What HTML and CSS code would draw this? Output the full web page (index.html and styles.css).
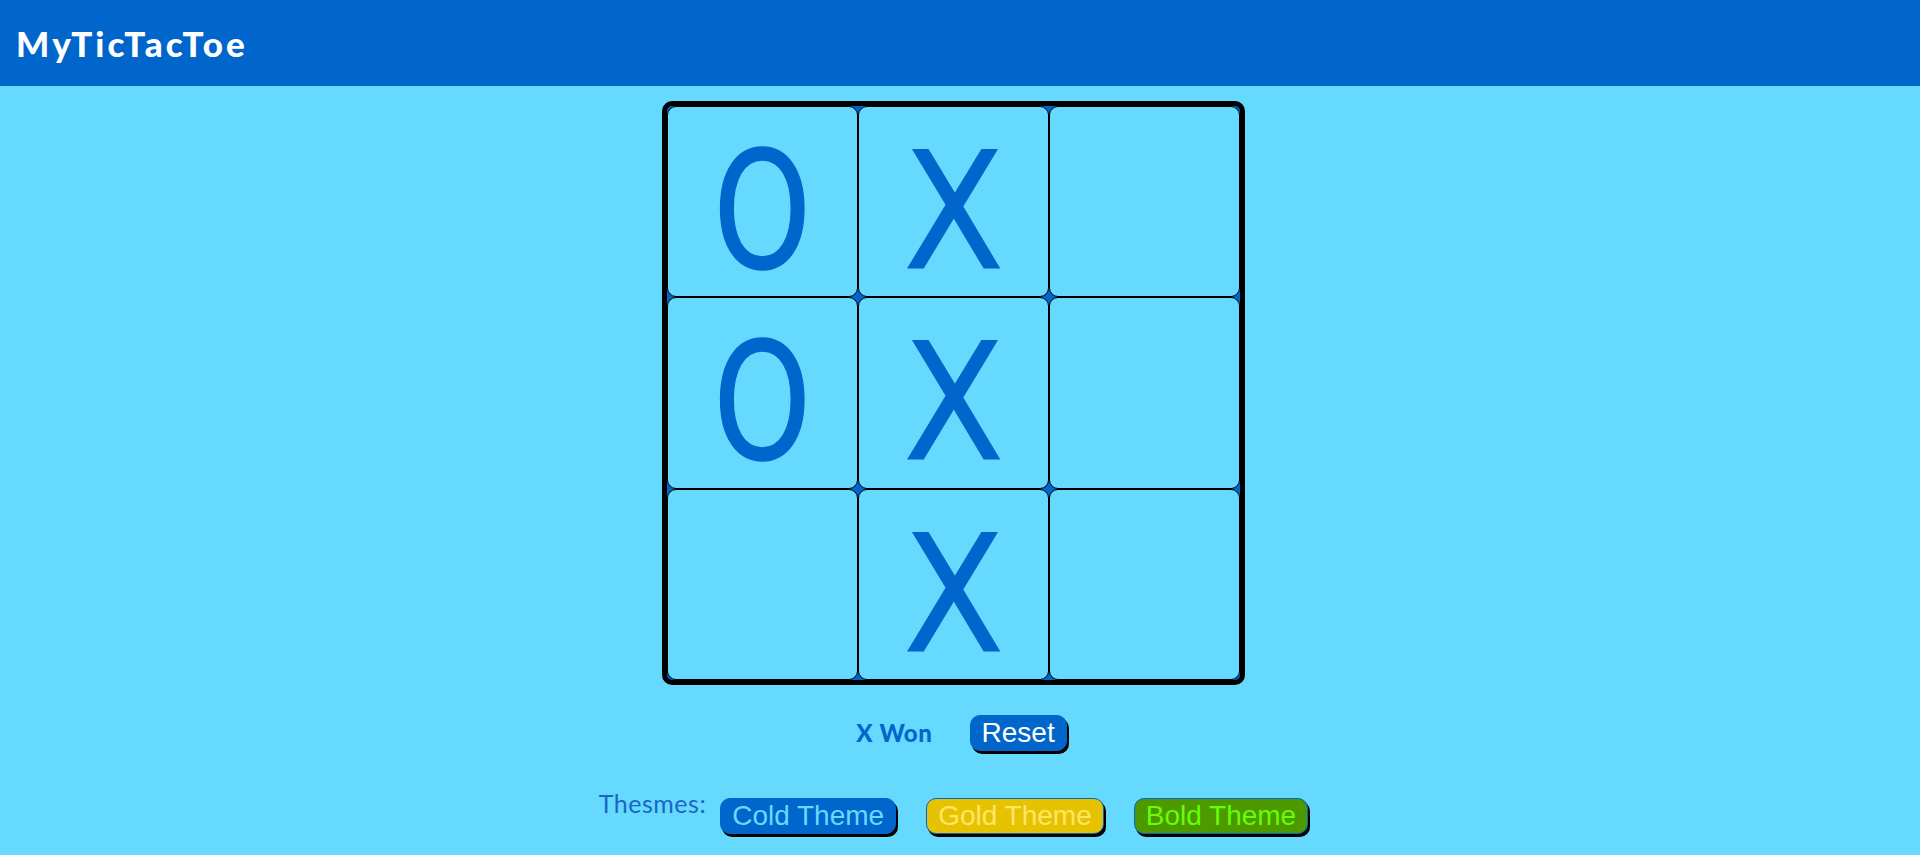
FILE: index.html
```html
<!DOCTYPE html>
<html>
<head>
<meta charset="utf-8">
<title>MyTicTacToe</title>
<link rel="stylesheet" href="styles.css">
</head>
<body>
<header class="topbar">
  <h1 class="title">MyTicTacToe</h1>
</header>
<main class="main">
  <div class="board">
    <div class="cell"><span class="mark mark-o">O</span></div>
    <div class="cell"><span class="mark mark-x">X</span></div>
    <div class="cell"></div>
    <div class="cell"><span class="mark mark-o">O</span></div>
    <div class="cell"><span class="mark mark-x">X</span></div>
    <div class="cell"></div>
    <div class="cell"></div>
    <div class="cell"><span class="mark mark-x">X</span></div>
    <div class="cell"></div>
  </div>
  <div class="status-row">
    <span class="status">X Won</span>
    <button class="btn btn-reset">Reset</button>
  </div>
  <div class="themes-row">
    <span class="themes-label">Thesmes:</span>
    <button class="btn btn-cold">Cold Theme</button>
    <button class="btn btn-gold">Gold Theme</button>
    <button class="btn btn-bold">Bold Theme</button>
  </div>
</main>
</body>
</html>
```

FILE: styles.css
```css
html, body {
  margin: 0;
  padding: 0;
}
body {
  background: #66d9ff;
  font-family: "Liberation Sans", Arial, sans-serif;
  min-height: 855px;
}
.topbar {
  height: 86px;
  background: #0066cc;
  display: flex;
  align-items: center;
  padding-left: 16px;
}
.title {
  margin: 0;
  color: #ffffff;
  font-family: "Comic Sans MS", "Lato", sans-serif;
  font-weight: 900;
  font-size: 35px;
  letter-spacing: 3.2px;
}
.main {
  display: flex;
  flex-direction: column;
  align-items: center;
}
.board {
  margin: 15px 13px 0 0;
  display: grid;
  grid-template-columns: repeat(3, 191px);
  grid-template-rows: repeat(3, 191.33px);
  border: 5px solid #000;
  border-radius: 10px;
  background: #0066cc;
}
.cell {
  box-sizing: border-box;
  border: 1px solid #000;
  border-radius: 9px;
  background: #66d9ff;
  display: flex;
  align-items: flex-start;
  justify-content: center;
  padding-top: 10px;
}
.mark {
  display: inline-block;
  font-family: "DejaVu Sans", sans-serif;
  font-size: 163px;
  line-height: normal;
  color: #0066cc;
}
.mark-x {
  transform: scaleX(0.9);
  -webkit-text-stroke: 1px #0066cc;
}
.mark-o {
  transform: scaleX(0.76);
  -webkit-text-stroke: 1.5px #0066cc;
}
.status-row {
  margin: 30px 0 0 3px;
  display: flex;
  align-items: center;
  gap: 37px;
}
.status {
  font-family: "Comic Sans MS", "Lato", sans-serif;
  font-weight: 900;
  font-size: 24px;
  letter-spacing: 0.6px;
  color: #0066cc;
}
.btn {
  font-family: "Liberation Sans", Arial, sans-serif;
  font-size: 28px;
  line-height: 32px;
  border-radius: 10px;
  box-shadow: 2px 3px 0 #000;
  cursor: pointer;
  height: 36px;
  padding: 0 11px;
}
.btn-reset {
  background: #0066cc;
  color: #ffffff;
  border: 1px solid #0066cc;
}
.themes-row {
  margin: 47px 13px 0 0;
  display: flex;
  align-items: flex-start;
}
.themes-label {
  font-family: "Comic Sans MS", "Lato", sans-serif;
  font-size: 25px;
  letter-spacing: 0.5px;
  color: #1a66c4;
  margin-top: -10px;
  margin-right: 14px;
}
.btn-cold {
  background: #0066cc;
  color: #66d9ff;
  border: 1px solid #0066cc;
  margin-right: 30px;
}
.btn-gold {
  background: #e6c300;
  color: #ffe566;
  border: 1px solid #0066cc;
  margin-right: 30px;
}
.btn-bold {
  background: #4d9900;
  color: #66ff00;
  border: 1px solid #0066cc;
}
```
